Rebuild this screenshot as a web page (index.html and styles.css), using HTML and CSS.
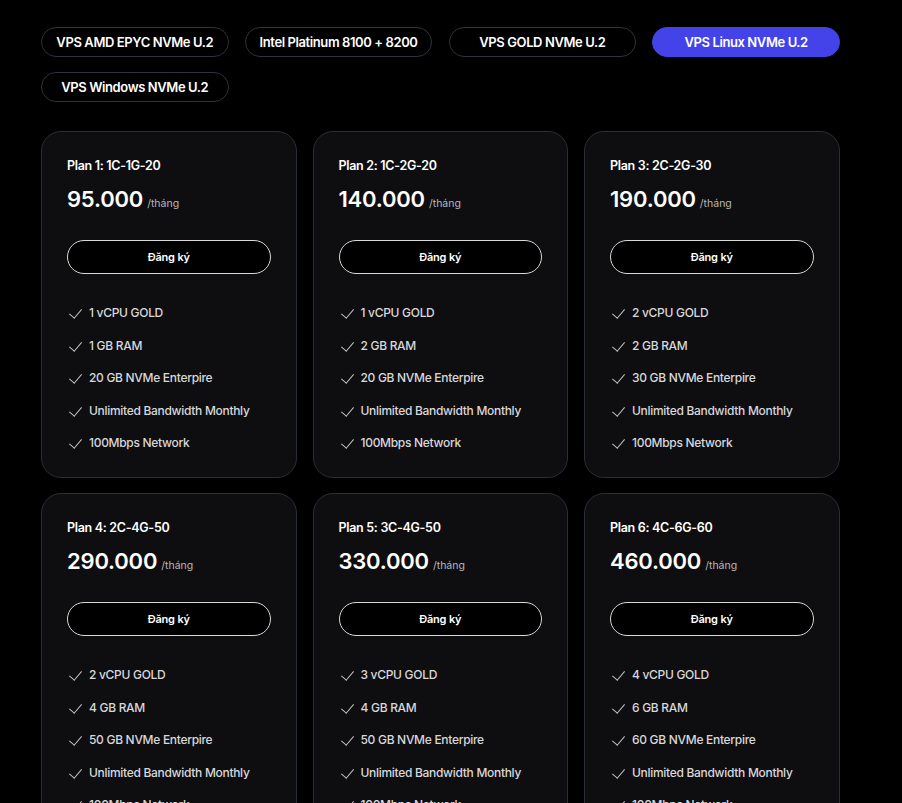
FILE: index.html
```html
<!DOCTYPE html>
<html lang="vi">
<head>
    <meta charset="UTF-8">
    <meta name="viewport" content="width=device-width, initial-scale=1.0">
    <title>Bảng giá VPS</title>
    <link rel="stylesheet" href="styles.css">
</head>
<body>
<div class="page">
    <!-- Tabs -->
    <div class="tabs">
        <button class="tab">VPS AMD EPYC NVMe U.2</button>
        <button class="tab">Intel Platinum 8100 + 8200</button>
        <button class="tab">VPS GOLD NVMe U.2</button>
        <button class="tab active">VPS Linux NVMe U.2</button>
        <button class="tab">VPS Windows NVMe U.2</button>
    </div>

    <!-- Plans -->
    <div class="plans">
        <div class="card">
            <div class="plan-name">Plan 1: 1C-1G-20</div>
            <div class="price">95.000<span>/tháng</span></div>
            <button class="signup">Đăng ký</button>
            <ul class="features">
                <li>1 vCPU GOLD</li>
                <li>1 GB RAM</li>
                <li>20 GB NVMe Enterpire</li>
                <li>Unlimited Bandwidth Monthly</li>
                <li>100Mbps Network</li>
            </ul>
        </div>
        <div class="card">
            <div class="plan-name">Plan 2: 1C-2G-20</div>
            <div class="price">140.000<span>/tháng</span></div>
            <button class="signup">Đăng ký</button>
            <ul class="features">
                <li>1 vCPU GOLD</li>
                <li>2 GB RAM</li>
                <li>20 GB NVMe Enterpire</li>
                <li>Unlimited Bandwidth Monthly</li>
                <li>100Mbps Network</li>
            </ul>
        </div>
        <div class="card">
            <div class="plan-name">Plan 3: 2C-2G-30</div>
            <div class="price">190.000<span>/tháng</span></div>
            <button class="signup">Đăng ký</button>
            <ul class="features">
                <li>2 vCPU GOLD</li>
                <li>2 GB RAM</li>
                <li>30 GB NVMe Enterpire</li>
                <li>Unlimited Bandwidth Monthly</li>
                <li>100Mbps Network</li>
            </ul>
        </div>
        <div class="card">
            <div class="plan-name">Plan 4: 2C-4G-50</div>
            <div class="price">290.000<span>/tháng</span></div>
            <button class="signup">Đăng ký</button>
            <ul class="features">
                <li>2 vCPU GOLD</li>
                <li>4 GB RAM</li>
                <li>50 GB NVMe Enterpire</li>
                <li>Unlimited Bandwidth Monthly</li>
                <li>100Mbps Network</li>
            </ul>
        </div>
        <div class="card">
            <div class="plan-name">Plan 5: 3C-4G-50</div>
            <div class="price">330.000<span>/tháng</span></div>
            <button class="signup">Đăng ký</button>
            <ul class="features">
                <li>3 vCPU GOLD</li>
                <li>4 GB RAM</li>
                <li>50 GB NVMe Enterpire</li>
                <li>Unlimited Bandwidth Monthly</li>
                <li>100Mbps Network</li>
            </ul>
        </div>
        <div class="card">
            <div class="plan-name">Plan 6: 4C-6G-60</div>
            <div class="price">460.000<span>/tháng</span></div>
            <button class="signup">Đăng ký</button>
            <ul class="features">
                <li>4 vCPU GOLD</li>
                <li>6 GB RAM</li>
                <li>60 GB NVMe Enterpire</li>
                <li>Unlimited Bandwidth Monthly</li>
                <li>100Mbps Network</li>
            </ul>
        </div>
    </div>
</div>
</body>
</html>
```

FILE: styles.css
```css
body { margin: 0; background: #000; color: #fff; font-family: Inter, "Noto Sans", sans-serif; }
.page { padding: 27px 41px; }

.tabs { display: flex; flex-wrap: wrap; gap: 15px 16.3px; width: 810px; }
.tab { width: 187.5px; height: 30px; border: 1px solid #2e333d; border-radius: 15px; background: #000; color: #fff; font-family: inherit; font-size: 13px; font-weight: 600; letter-spacing: -0.4px; cursor: pointer; }
.tab.active { background: #4343e9; border-color: #4343e9; }

.plans { display: grid; grid-template-columns: repeat(3, 255.5px); gap: 15px 16px; margin-top: 29px; }
.card { background: #0e0e10; border: 1px solid #2a2e36; border-radius: 20px; padding: 25px 25px 24px; }
.plan-name { font-size: 12.5px; font-weight: 600; letter-spacing: -0.3px; line-height: 18px; }
.price { margin-top: 10px; font-size: 22px; font-weight: 600; line-height: 28px; letter-spacing: -0.2px; }
.price span { margin-left: 4px; font-size: 10.5px; font-weight: 400; color: #b8b8bc; letter-spacing: 0; }
.signup { display: block; width: 100%; height: 34px; margin-top: 22px; border: 1px solid #d8d8d8; border-radius: 17px; background: #000; color: #fff; font-family: inherit; font-size: 11px; font-weight: 600; letter-spacing: -0.2px; }
.features { list-style: none; margin: 29px 0 0; padding: 0; }
.features li { position: relative; padding-left: 22px; font-size: 12px; font-weight: 500; line-height: 20px; color: #d8d8dc; letter-spacing: -0.3px; margin-bottom: 12.5px; }
.features li:last-child { margin-bottom: 0; }
.features li::before { content: ""; position: absolute; left: 5px; top: 3px; width: 6px; height: 11px; border: solid #c4c4c8; border-width: 0 1.4px 1.4px 0; transform: rotate(40deg); }
```
